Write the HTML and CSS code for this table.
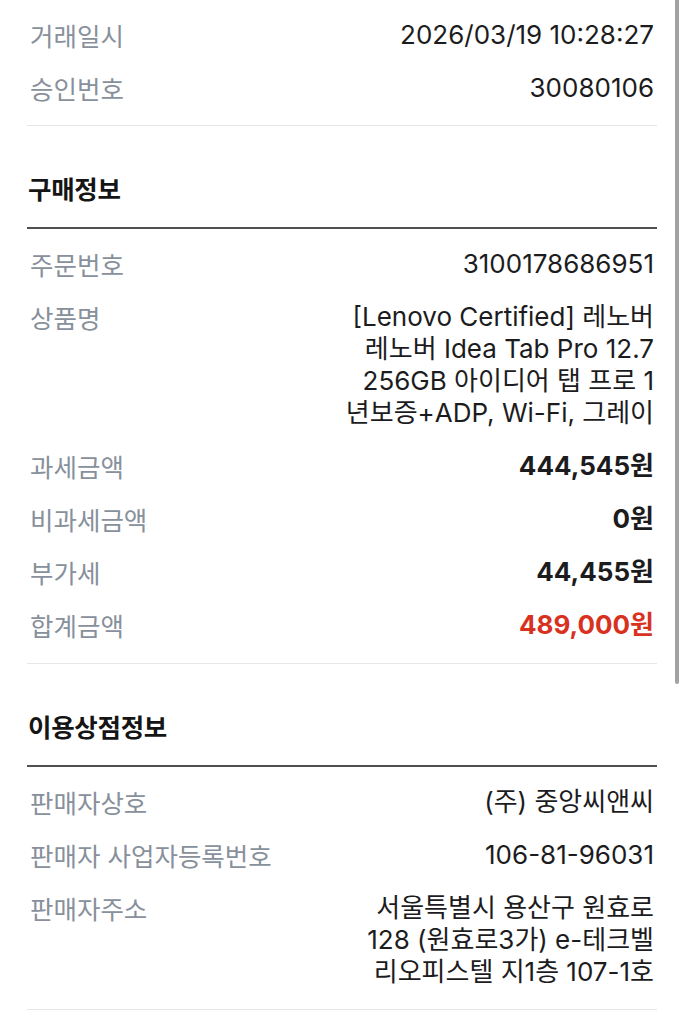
FILE: index.html
```html
<!DOCTYPE html>
<html lang="ko">
<head>
<meta charset="utf-8">
<title>결제 상세</title>
<link rel="stylesheet" href="styles.css">
</head>
<body>
<div class="page">
  <section class="section first">
    <div class="row"><span class="label">거래일시</span><span class="value">2026/03/19 10:28:27</span></div>
    <div class="row"><span class="label">승인번호</span><span class="value">30080106</span></div>
  </section>

  <section class="section">
    <h2 class="heading">구매정보</h2>
    <div class="list">
      <div class="row"><span class="label">주문번호</span><span class="value">3100178686951</span></div>
      <div class="row"><span class="label">상품명</span><span class="value multi">[Lenovo Certified] 레노버<br>레노버 Idea Tab Pro 12.7<br>256GB 아이디어 탭 프로 1<br>년보증+ADP, Wi-Fi, 그레이</span></div>
      <div class="row"><span class="label">과세금액</span><span class="value bold">444,545원</span></div>
      <div class="row"><span class="label">비과세금액</span><span class="value bold">0원</span></div>
      <div class="row"><span class="label">부가세</span><span class="value bold">44,455원</span></div>
      <div class="row"><span class="label">합계금액</span><span class="value bold red">489,000원</span></div>
    </div>
  </section>

  <section class="section">
    <h2 class="heading">이용상점정보</h2>
    <div class="list">
      <div class="row"><span class="label">판매자상호</span><span class="value">(주) 중앙씨앤씨</span></div>
      <div class="row"><span class="label">판매자 사업자등록번호</span><span class="value">106-81-96031</span></div>
      <div class="row"><span class="label">판매자주소</span><span class="value multi">서울특별시 용산구 원효로<br>128 (원효로3가) e-테크벨<br>리오피스텔 지1층 107-1호</span></div>
    </div>
  </section>
</div>
<div class="scrollbar"></div>
</body>
</html>
```

FILE: styles.css
```css
html, body {
  margin: 0;
  padding: 0;
  background: #ffffff;
}

body {
  font-family: Inter, "Noto Sans CJK KR", sans-serif;
  color: #1c1c1e;
  width: 685px;
  height: 1024px;
  overflow: hidden;
  position: relative;
}

.page {
  padding: 9px 28px 0 27px;
}

.section {
  border-bottom: 1px solid #e6e6e8;
  padding-bottom: 10px;
}

.heading {
  margin: 0;
  padding: 46px 0 23px 1px;
  font-size: 25.5px;
  line-height: 32px;
  font-weight: 700;
  color: #151515;
  border-bottom: 2px solid #505050;
  font-family: "Noto Sans CJK KR", sans-serif;
  letter-spacing: -0.3px;
}

.list {
  padding-top: 9.5px;
}

.row {
  display: flex;
  justify-content: space-between;
  align-items: flex-start;
  gap: 20px;
  padding: 9.5px 3px 11.5px 3px;
  line-height: 32px;
}

.label {
  font-family: "Noto Sans CJK KR", sans-serif;
  font-size: 25.5px;
  color: #87909b;
  white-space: nowrap;
}

.value {
  font-size: 26px;
  color: #1c1c1e;
  text-align: right;
}

.bold {
  font-weight: 700;
}

.red {
  color: #d8321f;
}

.scrollbar {
  position: absolute;
  top: 0;
  left: 675px;
  width: 4px;
  height: 684px;
  background: #a2a2a2;
  border-radius: 0 0 2px 2px;
}
```
